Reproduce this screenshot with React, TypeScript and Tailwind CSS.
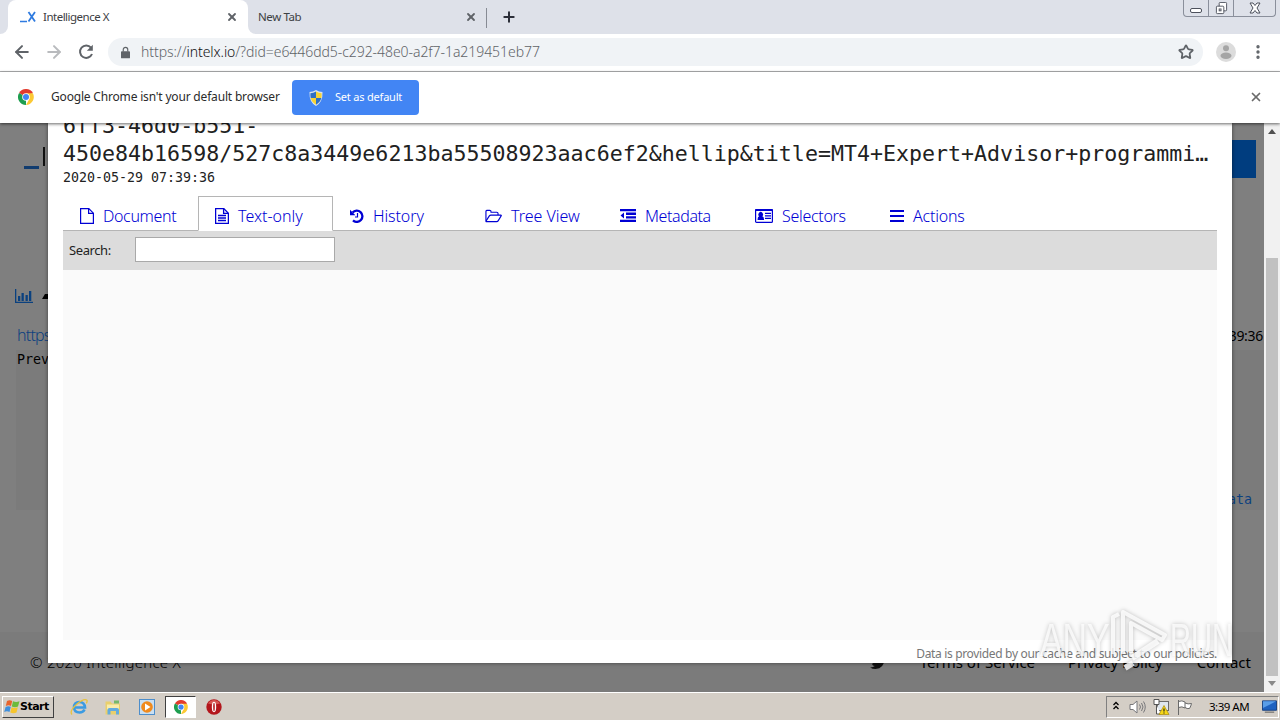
import type { ReactNode } from 'react';
import clsx from 'clsx';
import { ArrowLeft, ArrowRight, X, Plus, Star, MoreVertical } from 'lucide-react';

type Tab = { label: string; icon: ReactNode; active?: boolean; tracking: string };

const NAV_TABS: Tab[] = [
  {
    label: 'Document',
    tracking: 'tracking-[-0.35px]',
    icon: (
      <svg viewBox="0 0 14 16" className="h-4 w-3.5" fill="none" stroke="currentColor" strokeWidth="1.2">
        <path d="M.6.6h8.2l4.6 4.6v10.2H.6z" />
        <path d="M8.6.8v4.6h4.6" />
      </svg>
    ),
  },
  {
    label: 'Text-only',
    active: true,
    tracking: 'tracking-[0px]',
    icon: (
      <svg viewBox="0 0 14 16" className="h-4 w-3.5" fill="none" stroke="currentColor" strokeWidth="1.3">
        <path d="M.6.6h8.2l4.6 4.6v10.2H.6z" />
        <path d="M8.6.8v4.6h4.6M3 7.500h8M3 10h8M3 12.500h8" />
      </svg>
    ),
  },
  {
    label: 'History',
    tracking: 'tracking-[-0.1px]',
    icon: (
      <svg viewBox="0 0 14 14" className="h-3.5 w-3.5" fill="none" stroke="currentColor">
        <path d="M2.600 3.600A5.600 5.600 0 1 1 3 11.400" strokeWidth="2.300" />
        <path d="M0 .8v5.400h5.400z" fill="currentColor" stroke="none" />
        <path d="M7.500 4v4H5" strokeWidth="1.200" />
      </svg>
    ),
  },
  {
    label: 'Tree View',
    tracking: 'tracking-[0px]',
    icon: (
      <svg viewBox="0 0 18 14" className="h-3.5 w-[17px]" fill="none" stroke="currentColor" strokeWidth="1.200" strokeLinejoin="round">
        <path d="M1 12V2.300A1.300 1.300 0 0 1 2 1h3a1.300 1.300 0 0 1 1.300 1.300V3H12.500a1.300 1.300 0 0 1 1.300 1.300V6" />
        <path d="M1 12.400 4.600 6.900q.6-.8 1.600-.8h10.500q.9 0 .4.800l-3.200 5.300q-.5.800-1.500.8H1.600q-.8 0-.6-.6z" />
      </svg>
    ),
  },
  {
    label: 'Metadata',
    tracking: 'tracking-[-0.4px]',
    icon: (
      <svg viewBox="0 0 16 13" className="h-[13px] w-4" fill="currentColor">
        <path d="M0 0h16v2.300H0zM6 3.600h10v2.300H6zM6 7.200h10v2.300H6zM0 10.800h16V13H0zM4 3.500v6L.5 6.500z" />
      </svg>
    ),
  },
  {
    label: 'Selectors',
    tracking: 'tracking-[-0.3px]',
    icon: (
      <svg viewBox="0 0 18 14" className="h-3.5 w-[18px]" fill="currentColor">
        <rect x=".6" y=".6" width="16.800" height="12.800" rx="1" fill="none" stroke="currentColor" strokeWidth="1.200" />
        <path d="M0 1q0-1 1-1h16q1 0 1 1v1H0z" />
        <path d="M2.600 11q-.2-3.300 1.500-3.800a2.300 2.500 0 1 1 3.200 0Q9.200 7.700 9 11zM10 3.700h6v1.200h-6zM10 6.200h6v1.200h-6zM10 8.800h6V10h-6z" />
      </svg>
    ),
  },
  {
    label: 'Actions',
    tracking: 'tracking-[-0.2px]',
    icon: (
      <svg viewBox="0 0 14 12" className="h-3 w-3.5" fill="currentColor">
        <path d="M0 0h14v2H0zM0 5h14v2H0zM0 10h14v2H0z" />
      </svg>
    ),
  },
];

function ChromeLogo({ className }: { className?: string }) {
  return (
    <svg viewBox="0 0 16 16" className={className}>
      <path d="M8 8 1.070 4A8 8 0 0 1 14.930 4z" fill="#e33b2e" />
      <path d="M8 8 8 16A8 8 0 0 1 1.070 4z" fill="#1e9e50" />
      <path d="M8 4.300h6.900A8 8 0 0 1 8 16l3.300-6z" fill="#fcc934" />
      <circle cx="8" cy="8" r="3.800" fill="#fff" />
      <circle cx="8" cy="8" r="3" fill="#4285f4" />
    </svg>
  );
}

function Shield() {
  return (
    <svg viewBox="0 0 14 16" className="h-4 w-3.5">
      <path d="M7 0Q10 2 13.500 2q.5 10-6.500 14Q0 12 .5 2 4 2 7 0z" fill="#d9e3ee" />
      <path d="M7 1.500V8H1.700Q1.300 6 1.400 3.200 4.500 3 7 1.500z" fill="#2f6fc4" />
      <path d="M7 1.500V8h5.300q.4-2 .3-4.800Q9.500 3 7 1.500z" fill="#f7d334" />
      <path d="M7 14.700V8H1.700Q2.600 12 7 14.700z" fill="#f7d334" />
      <path d="M7 14.700V8h5.300Q11.400 12 7 14.700z" fill="#2f6fc4" />
    </svg>
  );
}

function TabStrip() {
  return (
    <div className="flex h-[34px] shrink-0 bg-[#dee1e9] text-[11.500px] text-[#3c4043]">
      <div className="flex w-2 bg-white">
        <div className="h-[34px] w-2 rounded-br-lg bg-[#dee1e9]" />
      </div>
      <div className="bg-[#dee1e9]">
        <div className="flex h-[34px] w-60 items-center rounded-t-lg bg-white pl-3 pr-[10px]">
          <svg viewBox="0 0 16 12" className="h-3 w-4" fill="none" stroke="#2f7be0">
            <path d="M0 10.500h7" strokeWidth="1.500" />
            <path d="M8.500 1 15 10.500M15 1 8.500 10.500" strokeWidth="1.800" />
          </svg>
          <span className="ml-[7px] flex-1 tracking-[-0.5px]">Intelligence X</span>
          <X className="h-3 w-3 text-[#5f6368]" strokeWidth={3.700} />
        </div>
      </div>
      <div className="flex w-2 bg-white">
        <div className="h-[34px] w-2 rounded-bl-lg bg-[#dee1e9]" />
      </div>
      <div className="flex w-[230px] items-center pl-0.5 pr-[9px]">
        <span className="flex-1 tracking-[-0.4px]">New Tab</span>
        <X className="h-3 w-3 text-[#5f6368]" strokeWidth={3.700} />
      </div>
      <div className="mt-2 h-5 w-px bg-[#878b94]" />
      <Plus className="ml-3.5 mt-[9px] h-4 w-4 text-[#2b2e38]" strokeWidth={3} />
      <div className="ml-auto mr-1 flex h-[17px] w-[93px] rounded-b border border-t-0 border-[#8a8f9b] text-[#4d515c]">
        <div className="flex w-[25px] items-end justify-center border-r border-[#8a8f9b] pb-[3px]">
          <div className="h-[5px] w-3 rounded-xs border border-[#4d515c] bg-white" />
        </div>
        <div className="flex w-[25px] justify-center border-r border-[#8a8f9b] pt-0.5">
          <svg viewBox="0 0 14 14" className="h-[13px] w-[13px]" fill="#fff" stroke="currentColor">
            <rect x="4.500" y=".5" width="8" height="9" rx="1" />
            <rect x="1.500" y="4.500" width="8" height="8" rx="1" />
            <rect x="4.500" y="7.500" width="2" height="2" />
          </svg>
        </div>
        <div className="flex flex-1 justify-center pt-0.5">
          <svg viewBox="0 0 12 12" className="h-3 w-3" fill="#fff" stroke="currentColor">
            <path d="M1 1h3l2 2.500L8 1h3L8 6l3 5H8L6 8.500 4 11H1l3-5z" />
          </svg>
        </div>
      </div>
    </div>
  );
}

function Toolbar() {
  return (
    <div className="flex h-[38px] shrink-0 items-center border-b border-[#b0b1b3] bg-white pb-px text-[#5f6368]">
      <ArrowLeft className="ml-3 h-5 w-5" strokeWidth={2.400} />
      <ArrowRight className="ml-3 h-5 w-5 text-[#b9bbbe]" strokeWidth={2.400} />
      <svg viewBox="0 0 16 16" className="ml-3.5 h-4 w-4" fill="none" stroke="currentColor" strokeWidth="2">
        <path d="M13 3.700A6.200 6.200 0 1 0 14 10" />
        <path d="M14.800.8v6H8.800z" fill="currentColor" stroke="none" />
      </svg>
      <div className="ml-3.5 flex h-7 w-[1095px] items-center rounded-full bg-[#f0f3f6] pl-[13px] pr-[9px]">
        <svg viewBox="0 0 10 13" className="h-[13px] w-[9px]" fill="currentColor">
          <path d="M1 5h8q1 0 1 1v6q0 1-1 1H1q-1 0-1-1V6q0-1 1-1z" />
          <path d="M2.500 5.500V3.300a2.500 2.500 0 0 1 5 0v2.200" fill="none" stroke="currentColor" strokeWidth="1.300" />
        </svg>
        <span className="ml-[11px] flex-1 pb-0.5 text-[14px] font-light tracking-[-0.06px] text-[#5f6368]">
          https://<span className="text-[#101114]">intelx.io</span>/?did=e6446dd5-c292-48e0-a2f7-1a219451eb77
        </span>
        <Star className="h-4 w-4" strokeWidth={2.700} />
      </div>
      <svg viewBox="0 0 20 20" className="ml-[13px] h-5 w-5">
        <circle cx="10" cy="10" r="10" fill="#dcdcdc" />
        <circle cx="10" cy="6.200" r="3" fill="#a5a5a5" />
        <ellipse cx="10" cy="13.800" rx="5.500" ry="3.200" fill="#a5a5a5" />
      </svg>
      <MoreVertical className="ml-[13px] h-[18px] w-[18px]" strokeWidth={2.500} />
    </div>
  );
}

function DefaultBrowserBar() {
  return (
    <div className="z-20 flex h-[51px] shrink-0 items-center bg-white pb-px pl-[18px] pr-[17px] shadow-[0_1px_3px_rgba(0,0,0,0.6)]">
      <ChromeLogo className="h-4 w-4" />
      <span className="ml-[17px] w-[241px] whitespace-nowrap text-[12px] tracking-[-0.18px] text-[#2b2b2b]">
        Google Chrome isn't your default browser
      </span>
      <div className="mt-px flex h-[35px] w-[127px] items-center rounded bg-[#4285f4] pl-[17px] text-[11px] tracking-[-0.2px] text-white">
        <Shield />
        <span className="ml-3 whitespace-nowrap">Set as default</span>
      </div>
      <X className="ml-auto h-3.5 w-3.5 text-[#6b6b6b]" strokeWidth={3} />
    </div>
  );
}

function ResultsPage() {
  return (
    <div className="flex h-full w-[1264px] shrink-0 flex-col bg-white text-[#212529]">
      <div className="flex h-14 justify-between pl-6 pr-2 pt-[17px]">
        <div className="flex">
          <div className="mt-[26px] h-[3px] w-[15px] bg-[#2279df]" />
          <div className="ml-1 mt-[7px] h-[19px] w-0.5 bg-[#222]" />
        </div>
        <div className="h-[38px] w-[120px] shrink-0 bg-[#007bff]" />
      </div>
      <div className="mt-[109px] flex h-4 items-center pl-[15px]">
        <svg viewBox="0 0 18 14" className="h-3.5 w-[18px]" fill="#1682ff">
          <path d="M0 0h1.300v12.700H18V14H0zM3 7h2.300v5H3zM6.500 4h2.300v8H6.500zM10.500 6h2.300v6h-2.300zM14 2h2.300v10H14z" />
        </svg>
        <svg viewBox="0 0 10 5" className="ml-[9px] h-[5px] w-[10px]">
          <path d="M0 5 3 0h4l3 5z" />
        </svg>
      </div>
      <div className="mt-[19px] flex h-6 items-center justify-between pl-[17px]">
        <span className="text-base font-light tracking-[-0.8px] text-[#1682ff]">https</span>
        <span className="pr-px text-[14px] tracking-[-0.3px] text-black">:39:36</span>
      </div>
      <div className="ml-4 mt-[3px] flex h-[160px] flex-col justify-between bg-[#f6f6f6] font-['DejaVu_Sans_Mono',monospace] text-[13.300px]">
        <span className="pl-px text-black">Prev</span>
        <span className="self-end pr-3 text-[#1682ff]">ata</span>
      </div>
      <div className="mt-[122px] flex flex-1 items-center bg-[#f6f6f6] pl-[30px] pr-[13px] text-[15px] text-black">
        <span className="flex-1 font-light tracking-[0.25px]">© 2020 Intelligence X</span>
        <svg viewBox="0 0 16 13" className="mr-[34px] h-[13px] w-4" fill="#222">
          <path d="M0 11.500q3 .2 4.800-1.400Q2.500 9.800 2 8h1.300Q.8 7 1 4.700l1.300.4Q.3 3.300 1.500.7 4.300 3.800 8 4q-.6-3.300 2.600-4 1.700 0 2.600 1L15.300.3 14 2.200l2-.5-1.600 1.700Q14.200 12 5.500 13 2.500 13 0 11.500z" />
        </svg>
        <span className="mr-[33px]">Terms of Service</span>
        <span className="mr-[34px]">Privacy Policy</span>
        <span>Contact</span>
      </div>
    </div>
  );
}

function DocumentModal() {
  return (
    <div className="absolute inset-y-0 left-0 w-[1264px] bg-black/50">
      <div className="ml-12 flex h-[540px] w-[1184px] flex-col bg-white px-[15px] shadow-[0_0_4px_rgba(0,0,0,0.5)]">
        <div className="-mt-[11px] font-['DejaVu_Sans_Mono',monospace] text-[21.600px] leading-7 tracking-[0.015px] text-[#212121]">
          <div>6ff3-46d0-b551-</div>
          <div className="whitespace-nowrap">
            450e84b16598/527c8a3449e6213ba55508923aac6ef2&amp;hellip&amp;title=MT4+Expert+Advisor+programmi…
          </div>
        </div>
        <div className="h-5 font-['DejaVu_Sans_Mono',monospace] text-[13.300px] leading-5 text-[#222]">
          2020-05-29 07:39:36
        </div>
        <div className="mt-2 flex h-[35px] shrink-0 border-b border-[#b5b5b5] text-base font-light text-[#0000d4]">
          {NAV_TABS.map((tab) => (
            <div
              key={tab.label}
              className={clsx(
                'flex h-[35px] w-[135px] items-center gap-2 border pl-4 pt-1',
                tab.active ? 'border-[#b5b5b5] border-b-white bg-white' : 'border-transparent',
              )}
            >
              {tab.icon}
              <span className={clsx('whitespace-nowrap pl-px', tab.tracking)}>{tab.label}</span>
            </div>
          ))}
        </div>
        <div className="flex h-[39px] shrink-0 items-start bg-[#dcdcdc] pl-1.5 pt-1.5 text-[13px] text-[#222]">
          <span className="w-[66px] pt-1 leading-[19px] tracking-[-0.4px]">Search:</span>
          <input className="h-[25px] w-[200px] border border-[#a9a9a9] bg-white" />
        </div>
        <div className="h-[370px] shrink-0 bg-[#fafafa]" />
        <div className="pt-1 text-right text-[12px] leading-5 tracking-[-0.34px] text-[#777]">
          Data is provided by our cache and subject to our policies.
        </div>
      </div>
    </div>
  );
}

function Watermark() {
  return (
    <div className="absolute bottom-5 right-[49px] flex h-16 items-center font-['Liberation_Sans_Narrow','Liberation_Sans',sans-serif] text-[47px] text-white/75 drop-shadow-[0_0_2px_rgba(0,0,0,0.3)]">
      <span className="w-[68px] origin-left scale-x-[0.72]">ANY</span>
      <svg viewBox="0 0 62 64" className="h-16 w-[62px]" fill="none" stroke="#fff" strokeOpacity=".8" strokeWidth="4" strokeLinejoin="round">
        <path d="M5 46V9l6-3M15 46V4l42 23-3 5-31-17v30" />
        <path d="M24 50 50 33M17 60l8-5" strokeWidth="6" />
      </svg>
      <span className="w-[61px] origin-left scale-x-[0.62]">RUN</span>
    </div>
  );
}

function Scrollbar() {
  return (
    <div className="flex w-4 shrink-0 flex-col items-center bg-[#f1f1f1] pt-1.5">
      <svg viewBox="0 0 8 5" className="h-[5px] w-2" fill="#505050"><path d="M0 5 4 0l4 5z" /></svg>
      <div className="mt-[124px] h-[418px] w-3 bg-[#c1c1c1]" />
      <svg viewBox="0 0 8 5" className="mt-[5px] h-[5px] w-2" fill="#8a8a8a"><path d="M0 0h8L4 5z" /></svg>
    </div>
  );
}

function WindowsFlag() {
  return (
    <svg viewBox="0 0 16 14" className="h-[15px] w-4 shrink-0">
      <path d="M3 1.500Q5.500 0 8.200 1.400L7 6.500Q4.500 5.200 1.800 6.600z" fill="#e8642c" />
      <path d="M9 1.800q3 1.500 6.500 0L14 7q-3 1.500-6.200 0z" fill="#6dbb3c" />
      <path d="M1.600 7.400Q4.300 6 6.800 7.300L5.500 12.500Q3 11.200.2 12.500z" fill="#3f8fdc" />
      <path d="M7.600 7.700q3 1.500 6.200 0L12.500 13q-3 1.300-6.200 0z" fill="#f7c52d" />
    </svg>
  );
}

function Taskbar() {
  return (
    <div className="z-20 flex h-7 shrink-0 items-center border-t border-white bg-[#d4cec6] pl-0.5 text-black">
      <div className="flex h-[22px] w-[52px] items-center border border-b-[#404040] border-l-white border-r-[#404040] border-t-white pl-px">
        <WindowsFlag />
        <span className="pt-px font-['DejaVu_Sans',sans-serif] text-[11px] font-bold tracking-[-0.5px]">Start</span>
      </div>
      {/* Internet Explorer */}
      <svg viewBox="0 0 18 18" className="ml-4 h-[18px] w-[18px]" fill="none">
        <path d="M4 9.500h11Q14.500 4 9.300 4T4 9.500q.3 5 5.500 5 3.700 0 5-3" stroke="#3b9be2" strokeWidth="2.600" />
        <path d="M2 16.500Q-1 13 6.500 6.500T17 2.300q.5 1-.7 3" stroke="#e8c23c" strokeWidth="1.300" />
      </svg>
      {/* Explorer folder */}
      <svg viewBox="0 0 18 18" className="ml-4 h-[18px] w-[18px]">
        <path d="M1.500 3.500h5l1.500 2h8v11h-14.500z" fill="#e9cf6c" />
        <path d="M3 6.500h12v5H3z" fill="#f8ecab" />
        <path d="M10 2.500h5v3h-5z" fill="#76b96a" />
        <path d="M3.500 16.500V12q0-2 2-2h7.500q2 0 2 2v4.500h-3V13H6.500v3.500z" fill="#62abdf" />
      </svg>
      {/* Media player */}
      <svg viewBox="0 0 16 16" className="ml-[17px] h-4 w-4">
        <rect x=".5" y=".5" width="15" height="15" fill="#c9dff2" stroke="#4d8ecb" />
        <circle cx="8" cy="8" r="5.800" fill="#f08a1d" />
        <path d="M6 4.500v7L11.500 8z" fill="#fff" />
      </svg>
      <div className="ml-2.5 flex h-[22px] w-[31px] items-center justify-center border border-b-white border-l-[#404040] border-r-white border-t-[#404040] bg-white">
        <ChromeLogo className="h-3.5 w-3.5" />
      </div>
      {/* Opera */}
      <svg viewBox="0 0 16 16" className="ml-2.5 h-4 w-4">
        <circle cx="8" cy="8" r="7.700" fill="#b3161c" />
        <path d="M2 4.500a7 7 0 0 1 12 0Q8 6.500 2 4.500z" fill="#d65552" />
        <ellipse cx="8" cy="8" rx="2.200" ry="5.200" fill="#fff" />
        <ellipse cx="8" cy="8" rx=".8" ry="4.200" fill="#b3161c" />
      </svg>
      <div className="ml-auto mr-px flex h-[22px] w-[173px] items-center border border-b-white border-l-[#808080] border-r-white border-t-[#808080] pl-1.5">
        <svg viewBox="0 0 6 9" className="mb-0.5 h-[9px] w-1.5" fill="none" stroke="#000" strokeWidth="1.300">
          <path d="M.5 4 3 1.500 5.500 4M.5 8 3 5.500 5.500 8" />
        </svg>
        <svg viewBox="0 0 17 16" className="ml-2.5 h-4 w-[17px]" fill="#fff" stroke="#77777a">
          <path d="M1 5.500h3L8 2v12l-4-3.500H1z" />
          <path d="M10.500 5.500q2 2.500 0 5M12.500 4q3 4 0 8M14.500 2.500q3.500 5.500 0 11" fill="none" />
        </svg>
        <svg viewBox="0 0 17 16" className="ml-[7px] h-4 w-[17px]">
          <rect x="4.500" y="2.500" width="11" height="9" fill="#dfe6ee" stroke="#6a6a6a" />
          <path d="M1 .5h5v5H1zM3.500 5.500V15h4" fill="#fff" stroke="#555" />
          <path d="m11 6.500 5 9H6z" fill="#f7d716" stroke="#a9890a" strokeWidth=".7" />
          <path d="M11 9.500v3M11 13.500v1" stroke="#222" strokeWidth="1.200" />
        </svg>
        <svg viewBox="0 0 16 16" className="ml-[7px] h-4 w-4" fill="#fff" stroke="#6a6a6a">
          <path d="M1.500 1v15M1.500 2.500Q5 1 8 3v6Q5 7 1.500 8.500M8 4q3 1.500 6.500.5Q14 7 12.500 9.500 10 10 8 8.500" />
        </svg>
        <span className="ml-4 whitespace-nowrap text-[11.500px] tracking-[-0.5px]">3:39 AM</span>
        <svg viewBox="0 0 16 13" className="ml-auto mr-px h-[13px] w-[15px]">
          <path d="M.5.500h15v10H.500z" fill="#1f62c0" stroke="#183f7d" />
          <path d="M1 1h14L1 8z" fill="#5a9ee8" />
          <path d="M3 12.500h10" stroke="#555" />
        </svg>
      </div>
    </div>
  );
}

export default function App() {
  return (
    <div className="flex h-[720px] w-[1280px] flex-col overflow-hidden bg-white font-['Noto_Sans',sans-serif]">
      <TabStrip />
      <Toolbar />
      <DefaultBrowserBar />
      <div className="relative flex h-[569px] shrink-0 overflow-hidden">
        <ResultsPage />
        <DocumentModal />
        <Scrollbar />
        <Watermark />
      </div>
      <Taskbar />
    </div>
  );
}
